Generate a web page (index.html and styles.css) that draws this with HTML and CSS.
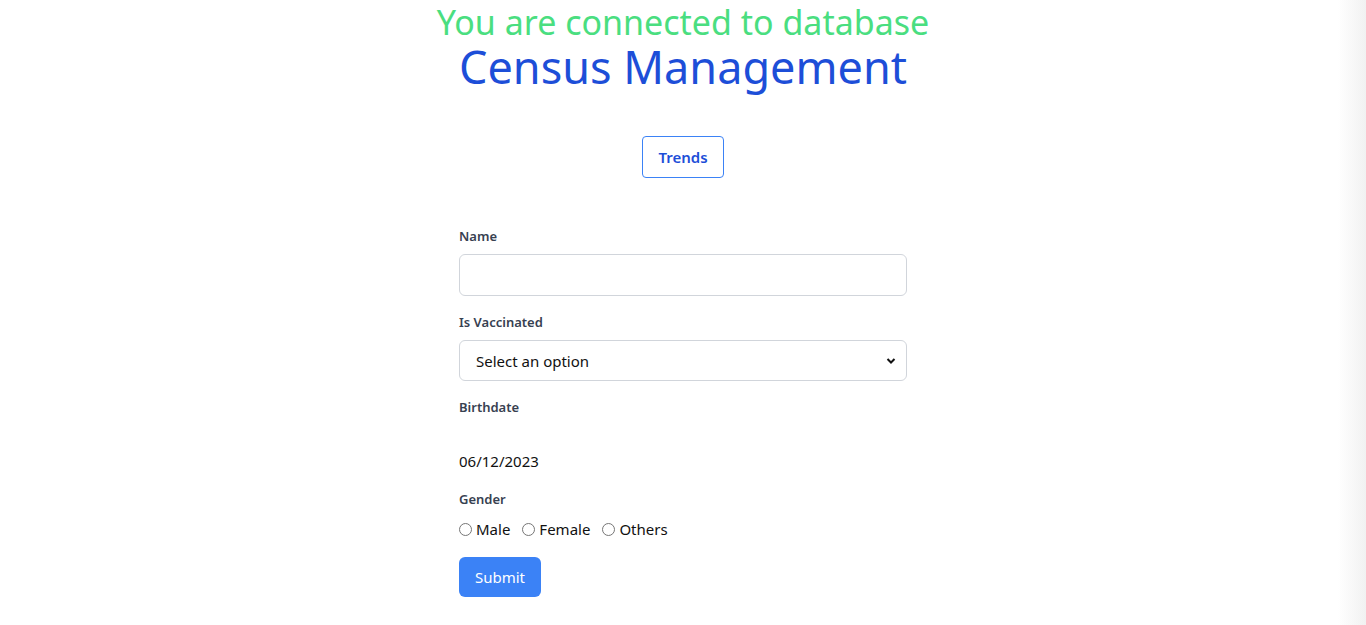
FILE: index.html
```html
<!DOCTYPE html>
<html>
<head>
<meta charset="utf-8">
<link rel="stylesheet" href="styles.css">
</head>
<body>
<div class="page">
  <h2 class="status">You are connected to database</h2>
  <h1 class="title">Census Management</h1>
  <div class="actions">
    <button class="btn-outline">Trends</button>
  </div>
  <form class="form">
    <div class="field">
      <label class="label">Name</label>
      <input class="control" type="text">
    </div>
    <div class="field">
      <label class="label">Is Vaccinated</label>
      <div class="select">
        <span>Select an option</span>
        <svg class="chev" width="10" height="8" viewBox="0 0 10 8"><path d="M1.5 2 L5 5.5 L8.5 2" fill="none" stroke="#111" stroke-width="2"/></svg>
      </div>
    </div>
    <div class="field field-date">
      <label class="label">Birthdate</label>
      <div class="date">06/12/2023</div>
    </div>
    <div class="field">
      <label class="label">Gender</label>
      <div class="radios">
        <label class="radio"><span class="dot"></span>Male</label>
        <label class="radio"><span class="dot"></span>Female</label>
        <label class="radio"><span class="dot"></span>Others</label>
      </div>
    </div>
    <button class="btn-primary" type="button">Submit</button>
  </form>
</div>
</body>
</html>
```
FILE: styles.css
```css
html, body {
  margin: 0;
  padding: 0;
}
body {
  font-family: "Noto Sans", "Open Sans", sans-serif;
  height: 625px;
  background: linear-gradient(to right, #ffffff 0, #ffffff 1338px, #f1f1f1 1366px);
  color: #111;
}
.page {
  display: flex;
  flex-direction: column;
  align-items: center;
}
.status {
  margin: 1px 0 0;
  font-weight: 400;
  font-size: 34px;
  line-height: 42px;
  color: #4ade80;
}
.title {
  margin: 0;
  font-weight: 400;
  font-size: 45px;
  line-height: 48px;
  color: #1d4ed8;
}
.actions {
  margin-top: 45px;
}
.btn-outline {
  font-family: inherit;
  background: #fff;
  border: 1px solid #3b82f6;
  border-radius: 4px;
  color: #1d4ed8;
  font-weight: 600;
  font-size: 15px;
  width: 82px;
  height: 42px;
  padding: 0;
}
.form {
  width: 448px;
  margin-top: 48px;
  display: flex;
  flex-direction: column;
}
.field {
  display: flex;
  flex-direction: column;
  margin-bottom: 16px;
}
.field-date {
  margin-bottom: 18px;
}
.label {
  font-size: 13px;
  font-weight: 600;
  color: #374151;
  line-height: 20px;
  margin-bottom: 8px;
}
.control {
  box-sizing: border-box;
  height: 42px;
  border: 1px solid #d1d5db;
  border-radius: 6px;
  font-family: inherit;
  font-size: 15px;
}
.select {
  box-sizing: border-box;
  height: 41px;
  border: 1px solid #d1d5db;
  border-radius: 6px;
  display: flex;
  align-items: center;
  justify-content: space-between;
  padding: 0 10px 0 16px;
  font-size: 15px;
}
.date {
  font-size: 15px;
  height: 46px;
  display: flex;
  align-items: flex-end;
  line-height: 20px;
}
.radios {
  display: flex;
  gap: 12px;
  font-size: 15px;
  line-height: 24px;
}
.radio {
  display: flex;
  align-items: center;
  gap: 4px;
}
.dot {
  width: 13px;
  height: 13px;
  border: 1px solid #767676;
  border-radius: 50%;
  box-sizing: border-box;
  display: inline-block;
}
.btn-primary {
  align-self: flex-start;
  font-family: inherit;
  background: #3b82f6;
  color: #fff;
  border: 0;
  border-radius: 6px;
  width: 82px;
  height: 40px;
  font-size: 15px;
  padding: 0;
}
```
